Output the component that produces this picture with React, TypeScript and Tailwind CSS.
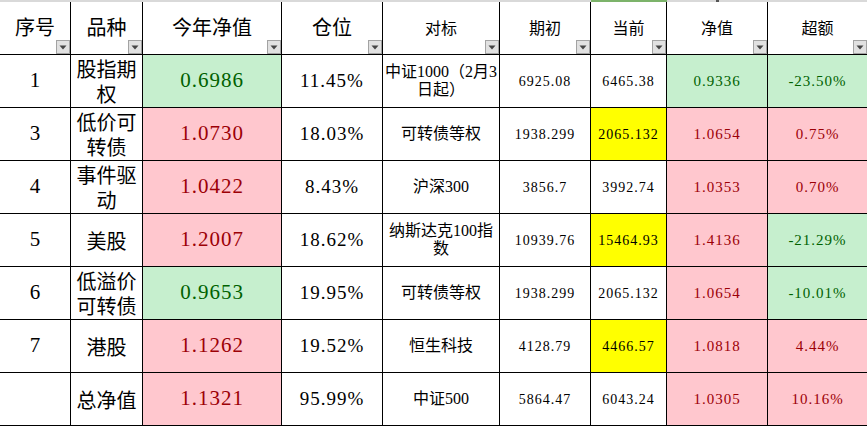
import React from "react";
import clsx from "clsx";

type Tone = "green" | "red" | "yellow" | "none";

interface Row {
  no: string;
  name: string[];
  nav: string;
  navTone: Tone;
  pos: string;
  bench: string[];
  start: string;
  cur: string;
  curTone: Tone;
  nav2: string;
  nav2Tone: Tone;
  ex: string;
  exTone: Tone;
}

const rows: Row[] = [
  { no: "1", name: ["股指期", "权"], nav: "0.6986", navTone: "green", pos: "11.45%", bench: ["中证1000（2月3", "日起）"], start: "6925.08", cur: "6465.38", curTone: "none", nav2: "0.9336", nav2Tone: "green", ex: "-23.50%", exTone: "green" },
  { no: "3", name: ["低价可", "转债"], nav: "1.0730", navTone: "red", pos: "18.03%", bench: ["可转债等权"], start: "1938.299", cur: "2065.132", curTone: "yellow", nav2: "1.0654", nav2Tone: "red", ex: "0.75%", exTone: "red" },
  { no: "4", name: ["事件驱", "动"], nav: "1.0422", navTone: "red", pos: "8.43%", bench: ["沪深300"], start: "3856.7", cur: "3992.74", curTone: "none", nav2: "1.0353", nav2Tone: "red", ex: "0.70%", exTone: "red" },
  { no: "5", name: ["美股"], nav: "1.2007", navTone: "red", pos: "18.62%", bench: ["纳斯达克100指", "数"], start: "10939.76", cur: "15464.93", curTone: "yellow", nav2: "1.4136", nav2Tone: "red", ex: "-21.29%", exTone: "green" },
  { no: "6", name: ["低溢价", "可转债"], nav: "0.9653", navTone: "green", pos: "19.95%", bench: ["可转债等权"], start: "1938.299", cur: "2065.132", curTone: "none", nav2: "1.0654", nav2Tone: "red", ex: "-10.01%", exTone: "green" },
  { no: "7", name: ["港股"], nav: "1.1262", navTone: "red", pos: "19.52%", bench: ["恒生科技"], start: "4128.79", cur: "4466.57", curTone: "yellow", nav2: "1.0818", nav2Tone: "red", ex: "4.44%", exTone: "red" },
  { no: "", name: ["总净值"], nav: "1.1321", navTone: "red", pos: "95.99%", bench: ["中证500"], start: "5864.47", cur: "6043.24", curTone: "none", nav2: "1.0305", nav2Tone: "red", ex: "10.16%", exTone: "red" },
];

const toneClass: Record<Tone, string> = {
  green: "bg-[#c6efce] text-[#006100]",
  red: "bg-[#ffc7ce] text-[#9c0006]",
  yellow: "bg-[#ffff00] text-black",
  none: "bg-white text-black",
};

const cjk = "font-['Noto_Sans_CJK_SC',sans-serif]";
const mixed = "font-['Liberation_Serif','Noto_Sans_CJK_SC',serif]";
const num = "font-['Liberation_Serif',serif] tabular-nums tracking-[1px]";

const Cell = ({ className, last, children }: { className?: string; last?: boolean; children?: React.ReactNode }) => (
  <div className={clsx("flex items-center justify-center border-b border-black text-center whitespace-nowrap", !last && "border-r", className)}>
    {children}
  </div>
);

// wrapped cell text, kept as one text block
const Lines = ({ lines }: { lines: string[] }) => (
  <span>
    {lines.map((l, i) => (
      <React.Fragment key={i}>
        {i > 0 && <br />}
        {l}
      </React.Fragment>
    ))}
  </span>
);

const Filter = () => (
  <div className="absolute right-0 bottom-0 w-[14px] h-[14px] bg-[#e1e1e1] border border-[#a3a3a3] flex items-center justify-center">
    <svg width="8" height="5" viewBox="0 0 8 5">
      <path d="M0.5 0.5 L7.5 0.5 L4 4.5 Z" fill="#444" />
    </svg>
  </div>
);

const headers = [
  { t: "序号", s: "text-[20px]" },
  { t: "品种", s: "text-[20px]" },
  { t: "今年净值", s: "text-[20px]" },
  { t: "仓位", s: "text-[20px]" },
  { t: "对标", s: "text-[16px]" },
  { t: "期初", s: "text-[16px]" },
  { t: "当前", s: "text-[16px]" },
  { t: "净值", s: "text-[16px]" },
  { t: "超额", s: "text-[16px]" },
];

const cols = "grid grid-cols-[71px_72px_139px_101px_117px_91px_76px_101px_99px]";

export default function App() {
  return (
    <div className="w-[867px] h-[426px] bg-white overflow-hidden">
      <div className={clsx(cols, "h-[2px]")}>
        <div className="col-span-6 bg-[#d9d9d9]" />
        <div className="bg-[#7cb36a]" />
        <div className="bg-[#d9d9d9] flex justify-center">
          <div className="w-[3px] h-[2px] bg-[#555]" />
        </div>
        <div className="bg-[#d9d9d9]" />
      </div>
      <div className={clsx(cols, "grid-rows-[53px_repeat(7,53px)] text-black")}>
        {headers.map((h, i) => (
          <Cell key={h.t} last={i === 8} className={clsx("relative bg-white pb-[2px]", cjk, h.s)}>
            {h.t}
            <Filter />
          </Cell>
        ))}
        {rows.map((r, i) => (
          <React.Fragment key={i}>
            <Cell className="text-[21px] font-['Liberation_Serif',serif]">{r.no}</Cell>
            <Cell className={clsx("text-[20px] leading-[25px]", cjk)}>
              <Lines lines={r.name} />
            </Cell>
            <Cell className={clsx("text-[21px]", num, toneClass[r.navTone])}>{r.nav}</Cell>
            <Cell className={clsx("text-[19px]", num)}>{r.pos}</Cell>
            <Cell className={clsx("text-[16px] leading-[18px]", mixed)}>
              <Lines lines={r.bench} />
            </Cell>
            <Cell className={clsx("text-[14px]", num)}>{r.start}</Cell>
            <Cell className={clsx("text-[14px]", num, toneClass[r.curTone])}>{r.cur}</Cell>
            <Cell className={clsx("text-[15px]", num, toneClass[r.nav2Tone])}>{r.nav2}</Cell>
            <Cell last className={clsx("text-[15px]", num, toneClass[r.exTone])}>{r.ex}</Cell>
          </React.Fragment>
        ))}
      </div>
    </div>
  );
}
